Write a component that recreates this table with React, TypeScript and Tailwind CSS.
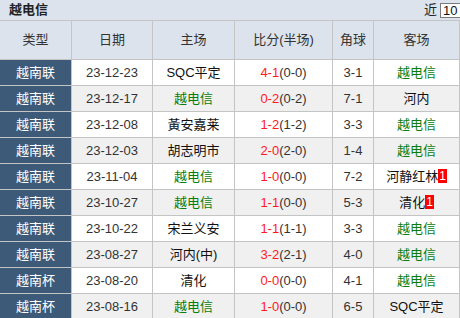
import React from 'react';

type Row = {
  type: string;
  date: string;
  home: string;
  score: string;
  half: string;
  corner: string;
  away: string;
  homeBadge?: string;
  awayBadge?: string;
};

const TEAM = '越电信';

const rows: Row[] = [
  { type: '越南联', date: '23-12-23', home: 'SQC平定', score: '4-1', half: '(0-0)', corner: '3-1', away: '越电信' },
  { type: '越南联', date: '23-12-17', home: '越电信', score: '0-2', half: '(0-2)', corner: '7-1', away: '河内' },
  { type: '越南联', date: '23-12-08', home: '黃安嘉莱', score: '1-2', half: '(1-2)', corner: '3-3', away: '越电信' },
  { type: '越南联', date: '23-12-03', home: '胡志明市', score: '2-0', half: '(2-0)', corner: '1-4', away: '越电信' },
  { type: '越南联', date: '23-11-04', home: '越电信', score: '1-0', half: '(0-0)', corner: '7-2', away: '河静红林', awayBadge: '1' },
  { type: '越南联', date: '23-10-27', home: '越电信', score: '1-1', half: '(0-0)', corner: '5-3', away: '清化', awayBadge: '1' },
  { type: '越南联', date: '23-10-22', home: '宋兰义安', score: '1-1', half: '(1-1)', corner: '3-3', away: '越电信' },
  { type: '越南联', date: '23-08-27', home: '河内(中)', score: '3-2', half: '(2-1)', corner: '4-0', away: '越电信' },
  { type: '越南杯', date: '23-08-20', home: '清化', score: '0-0', half: '(0-0)', corner: '4-1', away: '越电信' },
  { type: '越南杯', date: '23-08-16', home: '越电信', score: '1-0', half: '(0-0)', corner: '6-5', away: 'SQC平定' },
];

const cols = 'grid grid-cols-[72px_81px_82px_98px_41px_1fr]';
const cell = 'flex items-center justify-center border-r border-b border-[#c4c4c4] whitespace-nowrap';

const Team = ({ name, badge }: { name: string; badge?: string }) => (
  <span className={name === TEAM ? 'text-[#0a7d0a]' : 'text-[#111]'}>
    {name}
    {badge && (
      <span className="inline-block bg-[#ff0000] text-white text-[12px] leading-[14px] px-[1px] align-[1px]">{badge}</span>
    )}
  </span>
);

export default function App() {
  return (
    <div
      className="w-[460px] h-[318px] overflow-hidden bg-white text-[13px] text-[#333]"
      style={{ fontFamily: '"Liberation Sans", "Noto Sans CJK SC", sans-serif' }}
    >
      <div className="h-[21px] flex items-center justify-between bg-[#dce3ed] border-b border-[#c4c4c4] pl-[9px] overflow-hidden">
        <span className="font-bold text-[#222] text-[13px]">越电信</span>
        <div className="flex items-center gap-[3px] mr-[-14px]">
          <span className="text-[#222]">近</span>
          <div className="w-[34px] h-[15px] bg-white border border-[#7a7a7a] pl-[2px] leading-[13px] text-[#111]">10</div>
        </div>
      </div>

      <div className={`${cols} h-[39px] bg-[#dce3ed] text-[#333]`}>
        {['类型', '日期', '主场', '比分(半场)', '角球', '客场'].map((h) => (
          <div key={h} className={cell}>
            {h}
          </div>
        ))}
      </div>

      {rows.map((r, i) => (
        <div key={i} className={`${cols} h-[26px] ${i % 2 === 0 ? 'bg-white' : 'bg-[#f0f0f0]'}`}>
          <div className={`${cell} bg-[#3d5a78] text-white`}>{r.type}</div>
          <div className={cell}>{r.date}</div>
          <div className={cell}>
            <Team name={r.home} badge={r.homeBadge} />
          </div>
          <div className={cell}>
            <span className="text-[#ff1a1a]">{r.score}</span>
            <span className="text-[#333]">{r.half}</span>
          </div>
          <div className={cell}>{r.corner}</div>
          <div className={cell}>
            <Team name={r.away} badge={r.awayBadge} />
          </div>
        </div>
      ))}
    </div>
  );
}
